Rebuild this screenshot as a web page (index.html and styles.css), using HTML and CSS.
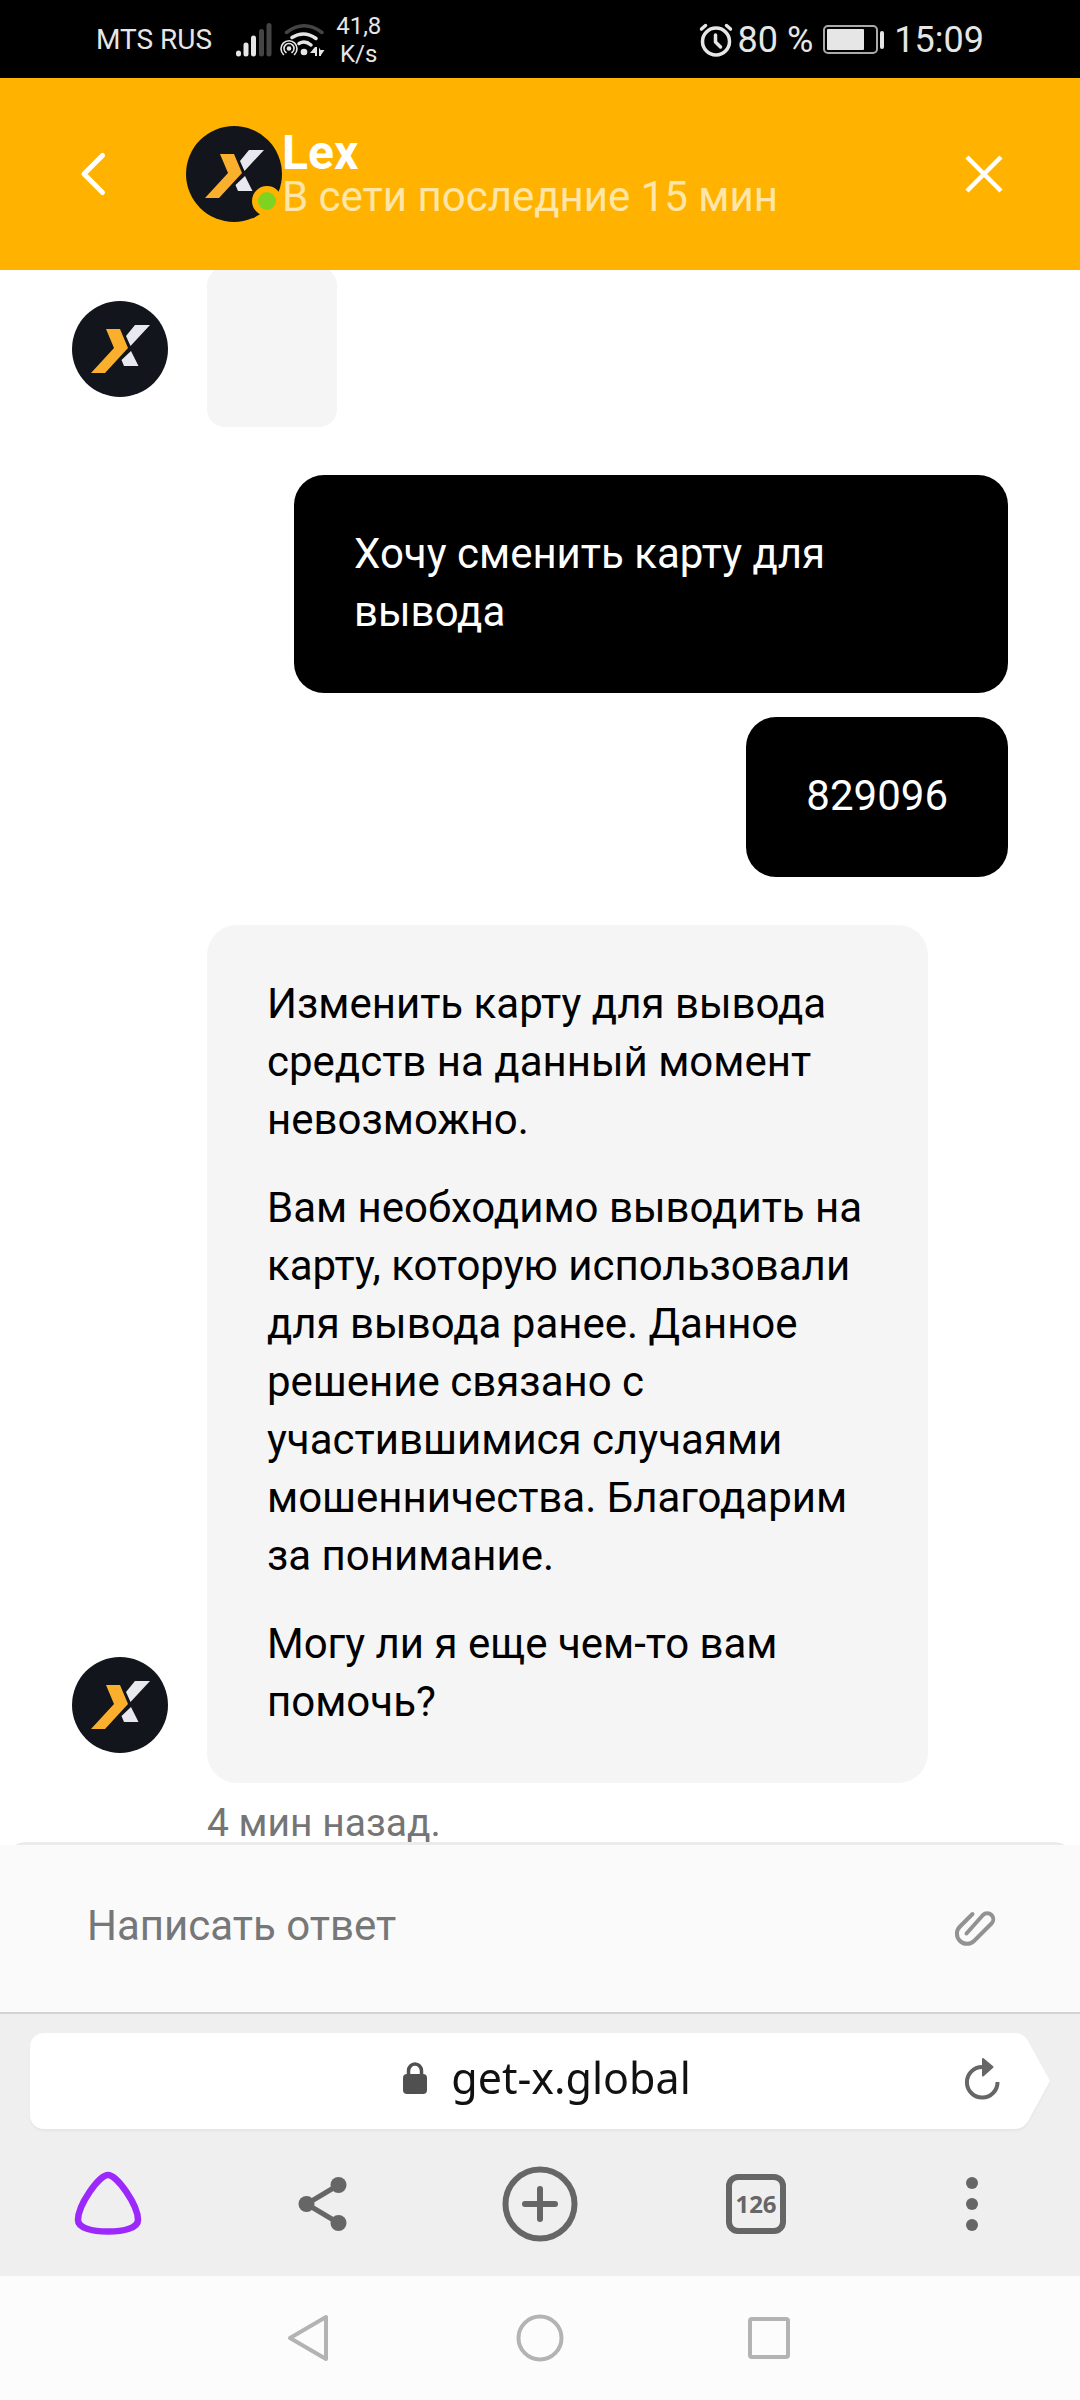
FILE: index.html
```html
<!DOCTYPE html>
<html lang="ru">
<head>
<meta charset="utf-8">
<meta name="viewport" content="width=device-width">
<title>Lex</title>
<link rel="stylesheet" href="styles.css">
</head>
<body>
<svg class="sprite" aria-hidden="true">
  <symbol id="logo" viewBox="0 0 96 96">
    <circle cx="48" cy="48" r="48" fill="#12151c"/>
    <path fill="#fbb02d" d="M34 28H48L56 47 33 72H19L42 47Z"/>
    <path fill="#e8e9ee" d="M63 24H78L58.500 45 54 35ZM59 50 66.500 65H52L49.500 59Z"/>
  </symbol>
</svg>

<div class="status">
  <div class="status-left">
    <span class="carrier">MTS RUS</span>
    <svg class="signal" width="36" height="34" viewBox="0 0 36 34" fill="none" stroke-width="5" stroke-linecap="round">
      <path stroke="#e6e6e6" d="M2.500 30V31M10 22V31M17.500 15V31"/>
      <path stroke="#444" d="M25.500 8.500V31M33 2.500V31"/>
    </svg>
    <svg class="wifi" width="46" height="34" viewBox="278 22 46 34" fill="none" stroke="#e6e6e6" stroke-width="3.500" stroke-linecap="round">
      <path stroke="#444" d="M284.500 31.500Q302 18 320 31.500"/>
      <path d="M290 36.500Q302 29 314 37.500M297 42.500Q303 39 309 44"/>
      <circle cx="302" cy="51" r="3.300" fill="#e6e6e6" stroke="none"/>
      <circle cx="287" cy="47.500" r="2.300" fill="#e6e6e6" stroke="none"/>
      <path stroke-width="1.600" d="M281.500 53.500A8 8 0 1 1 292.500 53.500M284 51.500A5 5 0 1 1 290 51.500"/>
      <path fill="#e6e6e6" stroke="none" d="M308 52 313 46H315V55H313V52ZM317 46.500 318.500 49H322.500L319 54V55H317Z"/>
    </svg>
    <span class="rate">41,8<br>K/s</span>
  </div>
  <div class="status-right">
    <svg width="34" height="34" viewBox="0 0 34 34" fill="none" stroke="#e6e6e6" stroke-width="3.500" stroke-linecap="round" stroke-linejoin="round">
      <circle cx="17" cy="18.500" r="13.500"/>
      <path d="M2.500 6 6.500 2.500M31.500 6 27.500 2.500M16.500 12V19L21.500 24"/>
    </svg>
    <span class="battery-text">80 %</span>
    <svg class="battery" width="62" height="30" viewBox="0 0 62 30">
      <rect x="1" y="1" width="53" height="27" rx="4" fill="none" stroke="#aaa" stroke-width="2"/>
      <rect x="4" y="4" width="37" height="21" rx="1" fill="#e6e6e6"/>
      <rect x="57" y="6" width="4" height="18" rx="2" fill="#e6e6e6"/>
    </svg>
    <span class="clock">15:09</span>
  </div>
</div>

<header class="chat-header">
  <button class="icon-button" aria-label="Назад">
    <svg width="48" height="48" viewBox="0 0 48 48" fill="none" stroke="#fff" stroke-width="5" stroke-linecap="round" stroke-linejoin="round"><path d="M33.500 5.500 15 24 33.500 42.500"/></svg>
  </button>
  <div class="agent">
    <div class="agent-avatar">
      <svg class="avatar"><use href="#logo"/></svg>
      <span class="online"></span>
    </div>
    <div class="agent-info">
      <h1 class="agent-name">Lex</h1>
      <p class="agent-state">В сети последние 15 мин</p>
    </div>
  </div>
  <button class="icon-button" aria-label="Закрыть">
    <svg width="48" height="48" viewBox="0 0 48 48" fill="none" stroke="#fff" stroke-width="4.500"><path d="M7 7 41 41M41 7 7 41"/></svg>
  </button>
</header>

<main class="chat">
  <div class="incoming">
    <svg class="avatar"><use href="#logo"/></svg>
    <div class="bubble bubble-empty"></div>
  </div>
  <div class="outgoing">
    <p class="bubble bubble-own">Хочу сменить карту для вывода</p>
    <p class="bubble bubble-own">829096</p>
  </div>
  <div class="incoming">
    <svg class="avatar"><use href="#logo"/></svg>
    <div class="bubble">
      <p>Изменить карту для вывода средств на данный момент невозможно.</p>
      <p>Вам необходимо выводить на карту, которую использовали для вывода ранее. Данное решение связано с участившимися случаями мошенничества. Благодарим за понимание.</p>
      <p>Могу ли я еще чем-то вам помочь?</p>
    </div>
  </div>
  <p class="stamp">4 мин назад.</p>
</main>

<form class="composer">
  <input class="composer-input" type="text" placeholder="Написать ответ" aria-label="Написать ответ">
  <button class="icon-button" type="button" aria-label="Прикрепить файл">
    <svg width="48" height="48" viewBox="951 1905 48 48" fill="none" stroke="#929292" stroke-width="4" stroke-linecap="round" stroke-linejoin="round">
      <path d="M972.500 1914 960 1926.500A9.800 9.800 0 0 0 974 1941L991.500 1923.500A6 6 0 0 0 983 1915L966.500 1933.500"/>
    </svg>
  </button>
</form>

<footer class="browser">
  <div class="address">
    <div class="address-main">
      <button class="url">
        <svg width="24" height="32" viewBox="0 0 24 32"><rect y="12" width="24" height="20" rx="4" fill="#505050"/><path d="M5.500 14V9A6.500 7 0 0 1 18.500 9V14" fill="none" stroke="#505050" stroke-width="3.500"/></svg>
        <span>get-x.global</span>
      </button>
      <button class="icon-button reload" aria-label="Обновить">
        <svg width="36" height="48" viewBox="964 2057 36 48"><path d="M982 2067A15.300 15.300 0 1 0 997.500 2082" fill="none" stroke="#666" stroke-width="4"/><path d="M983 2059 992.500 2067 983 2075.500Z" fill="#666" stroke="#666" stroke-width="2" stroke-linejoin="round"/></svg>
      </button>
    </div>
    <svg class="address-tail" width="40" height="96" viewBox="0 0 40 96"><path fill="#fff" d="M0 0H5Q13 0 17.500 7L40 48 17.500 89Q13 96 5 96H0Z"/></svg>
  </div>
  <nav class="toolbar">
    <button class="icon-button" aria-label="Алиса">
      <svg width="72" height="72" viewBox="72 2167 72 72" fill="none" stroke="#9d28fc" stroke-width="6.500"><path d="M108 2174C117 2174 138 2204 138 2219C138 2227 124 2230.500 108 2230.500S78 2227 78 2219C78 2204 99 2174 108 2174Z"/></svg>
    </button>
    <button class="icon-button" aria-label="Поделиться">
      <svg width="72" height="72" viewBox="288 2168 72 72" fill="#666" stroke="#666"><path d="M338.500 2185 306.500 2204 338.500 2223" fill="none" stroke-width="5"/><circle cx="306.500" cy="2204" r="8" stroke="none"/><circle cx="338.500" cy="2185" r="8" stroke="none"/><circle cx="338.500" cy="2223" r="8" stroke="none"/></svg>
    </button>
    <button class="icon-button" aria-label="Новая вкладка">
      <svg width="76" height="76" viewBox="0 0 76 76" fill="none" stroke="#666" stroke-width="6" stroke-linecap="round"><circle cx="38" cy="38" r="34.500"/><path d="M38 23V53M23 38H53"/></svg>
    </button>
    <button class="icon-button" aria-label="Вкладки: 126"><span class="tabs">126</span></button>
    <button class="icon-button" aria-label="Меню">
      <svg width="72" height="72" viewBox="0 0 72 72" fill="#666"><circle cx="36" cy="15" r="6"/><circle cx="36" cy="36" r="6"/><circle cx="36" cy="57" r="6"/></svg>
    </button>
  </nav>
</footer>

<nav class="system-nav">
  <button class="icon-button" aria-label="Назад">
    <svg width="48" height="48" viewBox="0 0 48 48" fill="none" stroke="#b3b3b3" stroke-width="4" stroke-linejoin="round"><path d="M40 3V45L4 24Z"/></svg>
  </button>
  <button class="icon-button" aria-label="Домой">
    <svg width="48" height="48" viewBox="0 0 48 48" fill="none" stroke="#b3b3b3" stroke-width="4"><circle cx="24" cy="24" r="21.500"/></svg>
  </button>
  <button class="icon-button" aria-label="Недавние">
    <svg width="48" height="48" viewBox="0 0 48 48" fill="none" stroke="#b3b3b3" stroke-width="4"><rect x="4" y="5" width="38" height="38" rx="2"/></svg>
  </button>
</nav>
</body>
</html>
```
FILE: styles.css
```css
* {
  box-sizing: border-box;
}

body {
  margin: 0;
  min-height: 100vh;
  display: flex;
  flex-direction: column;
  background: #fff;
  color: #000;
  font-family: Roboto, "Liberation Sans", sans-serif;
  font-size: 42px;
  line-height: 58px;
}

p,
h1 {
  margin: 0;
}

svg {
  display: block;
  flex: none;
}

button {
  padding: 0;
  border: 0;
  background: none;
  color: inherit;
  font: inherit;
}

.sprite {
  position: absolute;
  width: 0;
  height: 0;
}

.icon-button {
  display: flex;
  align-items: center;
  justify-content: center;
}

.avatar {
  width: 96px;
  height: 96px;
}

/* Phone status bar */
.status {
  display: flex;
  align-items: center;
  justify-content: space-between;
  height: 78px;
  padding: 2px 96px 0;
  background: #000;
  color: #e6e6e6;
}

.status-left,
.status-right {
  display: flex;
  align-items: center;
}

.carrier {
  font-size: 28px;
}

.signal {
  margin-left: 24px;
}

.wifi {
  margin-left: 8px;
}

.rate {
  margin-left: 10px;
  font-size: 24px;
  line-height: 28px;
  text-align: center;
}

.battery-text,
.clock {
  font-size: 36px;
}

.battery-text {
  margin-left: 5px;
}

.battery {
  margin: 0 9px 0 10px;
}

/* Chat header */
.chat-header {
  display: flex;
  align-items: center;
  padding: 48px 72px 48px 69px;
  background: #ffb300;
  color: #fff;
}

.agent {
  display: flex;
  align-items: center;
  flex: 1;
  margin-left: 69px;
}

.agent-avatar {
  position: relative;
}

.online {
  position: absolute;
  right: 0;
  bottom: 6px;
  width: 30px;
  height: 30px;
  border: 6px solid #ffb300;
  border-radius: 50%;
  background: #7ed321;
}

.agent-info {
  padding-top: 2px;
}

.agent-name {
  font-size: 48px;
  line-height: 44px;
  font-weight: 700;
}

.agent-state {
  line-height: 44px;
  color: #ffe5a8;
}

/* Conversation */
.chat {
  flex: 1;
  display: flex;
  flex-direction: column;
  gap: 48px;
  margin-top: -3px;
  padding: 0 72px;
  clip-path: inset(3px 0 0);
}

.incoming {
  display: flex;
  align-items: flex-end;
  gap: 39px;
  padding-right: 80px;
}

.incoming .avatar {
  margin-bottom: 30px;
}

.bubble {
  display: flex;
  flex-direction: column;
  gap: 30px;
  padding: 50px 60px 52px;
  border-radius: 30px;
  background: #f5f5f5;
}

.bubble-empty {
  width: 130px;
  height: 160px;
  border-radius: 18px;
}

.outgoing {
  display: flex;
  flex-direction: column;
  align-items: flex-end;
  gap: 24px;
}

.bubble-own {
  max-width: 714px;
  background: #000;
  color: #fff;
}

.stamp {
  margin: -30px 0 0 135px;
  font-size: 39px;
  line-height: 44px;
  color: #757575;
}

/* Reply field */
.composer {
  position: relative;
  display: flex;
  align-items: center;
  height: 167px;
  padding: 0 81px 0 87px;
  background: #fafafa;
}

.composer::before {
  content: "";
  position: absolute;
  top: -3px;
  left: 16px;
  right: 16px;
  height: 3px;
  border-radius: 12px 12px 0 0 / 3px 3px 0 0;
  background: #ebebeb;
}

.composer-input {
  flex: 1;
  min-width: 0;
  height: 64px;
  padding: 0 0 6px;
  border: 0;
  background: none;
  font: inherit;
}

.composer-input::placeholder {
  color: #757779;
  opacity: 1;
}

/* Browser controls */
.browser {
  border-top: 2px solid #d3d3d3;
  background: #efefef;
}

.address {
  display: flex;
  margin: 19px 30px 0;
  filter: drop-shadow(0 2px 1px rgba(0, 0, 0, 0.04));
}

.address-main {
  flex: 1;
  display: grid;
  grid-template-columns: 1fr auto 1fr;
  align-items: center;
  height: 96px;
  padding: 0 10px 0 64px;
  border-radius: 14px 0 0 14px;
  background: #fff;
}

.url {
  grid-column: 2;
  display: flex;
  align-items: center;
  gap: 24px;
  padding-bottom: 6px;
  color: #111;
  font-family: "Noto Sans", "Open Sans", sans-serif;
  font-size: 43px;
}

.reload {
  justify-self: end;
}

.toolbar {
  display: grid;
  grid-template-columns: repeat(5, 1fr);
  height: 147px;
  padding-top: 3px;
}

.tabs {
  display: flex;
  justify-content: center;
  width: 60px;
  height: 60px;
  border: 6px solid #666;
  border-radius: 12px;
  color: #666;
  font: 700 24px/48px "Noto Sans", sans-serif;
}

/* System navigation */
.system-nav {
  display: flex;
  align-items: center;
  justify-content: center;
  gap: 182px;
  height: 124px;
  background: #fcfcfc;
}
```
